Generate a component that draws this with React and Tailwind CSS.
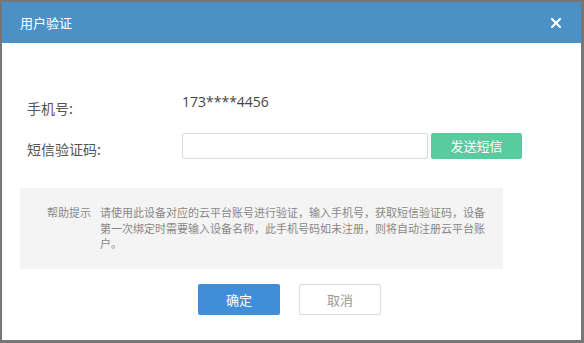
export default function App() {
  const font = { fontFamily: '"Noto Sans CJK SC", "Noto Sans", sans-serif' };

  return (
    <div className="w-[584px] h-[343px] bg-[#777777] pt-[2px] pl-[2px] pr-[3px] pb-[3px]" style={font}>
      <div className="w-[579px] h-[338px] bg-white flex flex-col">
        {/* Header */}
        <div className="h-[41px] bg-[#4b91c5] flex items-center justify-between pl-[18px] pr-[20px] shrink-0">
          <span className="text-[13px] text-white leading-none">用户验证</span>
          <svg width="10" height="10" viewBox="0 0 10 10" className="text-white">
            <path d="M1 1 L9 9 M9 1 L1 9" stroke="currentColor" strokeWidth="2" strokeLinecap="square" />
          </svg>
        </div>

        {/* Body */}
        <div className="flex flex-col pt-[49px]">
          <div className="flex items-start pl-[25px]">
            <div className="w-[155px] mt-[6px] text-[14px] leading-[20px] text-[#555]">手机号:</div>
            <div className="text-[14px] leading-[20px] text-[#444]" style={{ fontFamily: '"Open Sans", "Noto Sans CJK SC", sans-serif' }}>
              173****4456
            </div>
          </div>

          <div className="flex items-start pl-[25px] mt-[15px]">
            <div className="w-[155px] mt-[6px] text-[14px] leading-[20px] text-[#555]">短信验证码:</div>
            <input className="w-[246px] h-[26px] border border-[#dcdcdc] rounded-[2px] outline-none px-2 text-[13px]" />
            <button className="ml-[3px] w-[91px] h-[26px] bg-[#5acb9f] rounded-[2px] text-white text-[13px]">
              发送短信
            </button>
          </div>

          {/* Help */}
          <div className="ml-[18px] mt-[29px] w-[483px] h-[81px] bg-[#f4f4f4] flex items-start pt-[17px] pl-[27px]">
            <div className="w-[53px] text-[11px] leading-[15.5px] text-[#888] whitespace-nowrap">帮助提示</div>
            <div className="w-[386px] text-[11px] leading-[15.5px] text-[#888]">
              请使用此设备对应的云平台账号进行验证，输入手机号，获取短信验证码，设备第一次绑定时需要输入设备名称，此手机号码如未注册，则将自动注册云平台账户。
            </div>
          </div>

          {/* Footer */}
          <div className="flex justify-center gap-[19px] mt-[15px] pr-[4px]">
            <button className="w-[82px] h-[31px] bg-[#3f8fd8] rounded-[2px] text-white text-[13px]">确定</button>
            <button className="w-[82px] h-[31px] bg-white border border-[#dcdcdc] rounded-[2px] text-[#999] text-[13px]">取消</button>
          </div>
        </div>
      </div>
    </div>
  );
}
